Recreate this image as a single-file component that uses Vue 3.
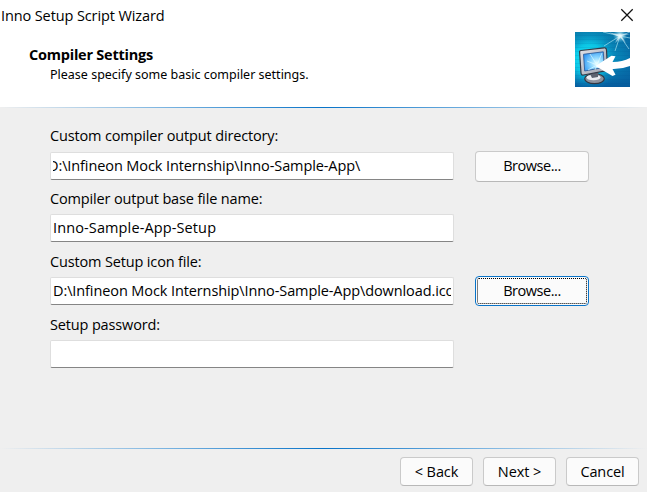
<script setup>
const fields = [
  { label: 'Custom compiler output directory:', value: 'D:\\Infineon Mock Internship\\Inno-Sample-App\\', browse: true, scrolled: true, id: 'f1' },
  { label: 'Compiler output base file name:', value: 'Inno-Sample-App-Setup', id: 'f2' },
  { label: 'Custom Setup icon file:', value: 'D:\\Infineon Mock Internship\\Inno-Sample-App\\download.ico', browse: true, focused: true, id: 'f3' },
  { label: 'Setup password:', value: '', id: 'f4' },
]
</script>

<template>
  <div class="window">
    <header class="head">
      <div class="titlebar">
        <span class="title">Inno Setup Script Wizard</span>
        <svg class="close" width="14" height="14" viewBox="0 0 14 14"><path d="M1.3 1.3 12.7 12.7M12.7 1.3 1.3 12.7" stroke="#111" stroke-width="1.25" fill="none" /></svg>
      </div>
      <div class="banner">
        <div class="heading">
          <h1><span>Compiler Settings</span></h1>
          <p><span>Please specify some basic compiler settings.</span></p>
        </div>
        <svg class="logo" width="55" height="55" viewBox="0 0 55 55">
          <defs>
            <linearGradient id="bg" x1="0" y1="0" x2="0" y2="1">
              <stop offset="0" stop-color="#087fae" /><stop offset=".5" stop-color="#079fca" /><stop offset="1" stop-color="#075a9d" />
            </linearGradient>
            <radialGradient id="glow" cx=".26" cy=".5" r=".56">
              <stop offset="0" stop-color="#20f4ff" /><stop offset=".5" stop-color="#0cd2ee" stop-opacity=".8" /><stop offset="1" stop-color="#0680bb" stop-opacity="0" />
            </radialGradient>
            <linearGradient id="shade" x1="0" y1="0" x2="1" y2="0">
              <stop offset=".5" stop-color="#075c9c" stop-opacity="0" /><stop offset="1" stop-color="#075c9c" stop-opacity=".65" />
            </linearGradient>
            <radialGradient id="screen" cx=".65" cy=".6" r=".75">
              <stop offset="0" stop-color="#ecffff" /><stop offset=".4" stop-color="#8fd9ff" /><stop offset="1" stop-color="#2791f2" />
            </radialGradient>
            <radialGradient id="star">
              <stop offset="0" stop-color="#fff" /><stop offset=".25" stop-color="#d8faff" stop-opacity=".75" /><stop offset="1" stop-color="#7bd8ee" stop-opacity="0" />
            </radialGradient>
            <linearGradient id="metal" x1="0" y1="0" x2="1" y2="1">
              <stop offset="0" stop-color="#e2e4ea" /><stop offset="1" stop-color="#9a9fac" />
            </linearGradient>
          </defs>
          <rect width="55" height="55" fill="url(#bg)" />
          <rect width="55" height="55" fill="url(#glow)" />
          <rect width="55" height="55" fill="url(#shade)" />
          <path d="M0 3.5h55M0 7.5h55M0 11.5h55M0 15.5h55M0 19.5h55M0 23.5h55M0 27.5h55M0 31.5h55M0 35.5h55M0 39.5h55M0 43.5h55M0 47.5h55M0 51.5h55" stroke="#024f88" stroke-opacity=".1" />
          <circle cx="45" cy="3.5" r="7" fill="url(#star)" />
          <path d="M45 4 28 0M45 4 29 14M45 4 40 19M45 4 54 17M45 4 55 0M45 4 55 6" stroke="#b9edf7" stroke-opacity=".6" stroke-width="1" />
          <path d="M45 2.5 34 .5 43.5 4.5 40 11 45.5 5.5 51 11 46.5 4 55 2Z" fill="#fff" fill-opacity=".6" />
          <ellipse cx="19.5" cy="46.7" rx="9.8" ry="5" fill="#8d929e" stroke="#323743" stroke-width="1.2" />
          <ellipse cx="18.5" cy="45.5" rx="7" ry="2.7" fill="#eceef2" />
          <path d="M14 40 23 38.5 23 45 17 46Z" fill="#5d6370" />
          <path d="M4.6 20.2Q4.3 18.8 6 18.5L29 15.8Q31.3 15.5 31.5 18L32.5 36Q32.7 38.3 30.5 38.9L8.5 43Q6.3 43.4 6 41Z" fill="url(#metal)" stroke="#343946" stroke-width="1.2" />
          <path d="M8.5 22.3 28.3 19.8 29.2 35.3 9.7 39Z" fill="url(#screen)" stroke="#315f9b" stroke-width=".9" />
          <path d="M22 33 15 22M22 33 12 29M22 33 13 38M22 33 20 38M22 33 27 21" stroke="#eaffff" stroke-opacity=".6" />
          <path d="M20.5 34 36.5 23.8 40.5 24.2 37.5 29.9Q47 30 55 26V34Q47 37.2 37.5 37L40.5 42.8 37.5 44Z" fill="#fff" />
        </svg>
      </div>
    </header>
    <main class="body">
      <div class="rule"></div>
      <form class="form" @submit.prevent>
        <section v-for="f in fields" :key="f.id" :class="['field', f.id]">
          <label><span>{{ f.label }}</span></label>
          <div class="row">
            <div class="input"><div class="clip"><span :class="['value', { scrolled: f.scrolled }]">{{ f.value }}</span></div></div>
            <button v-if="f.browse" type="button" :class="['btn', 'browse', { focused: f.focused }]"><span>Browse...</span></button>
          </div>
        </section>
      </form>
      <footer>
        <div class="rule"></div>
        <div class="actions">
          <button class="btn back"><span>&lt; Back</span></button>
          <button class="btn next"><span>Next &gt;</span></button>
          <button class="btn cancel"><span>Cancel</span></button>
        </div>
      </footer>
    </main>
  </div>
</template>

<style>
body { background: #fff; overflow: hidden; }
</style>

<style scoped>
* { box-sizing: border-box; }
.window { width: 647px; height: 492px; display: flex; flex-direction: column; background: #fff; color: #000; font: 14.5px/20px "Open Sans", "Noto Sans", sans-serif; white-space: nowrap; overflow: hidden; }
.head { height: 107px; flex: none; }
.titlebar { height: 32px; display: flex; justify-content: space-between; padding: 6px 13px 0 1px; }
.title { letter-spacing: -.11px; }
.close { margin-top: 2px; }
.banner { display: flex; justify-content: space-between; padding: 0 17px 0 29px; }
.heading { padding-top: 13px; }
h1 { margin: 0; font-size: 14.5px; line-height: 20px; font-weight: 700; letter-spacing: -.23px; }
p { margin: 0 0 0 21px; font: 12.5px/20px "Noto Sans", sans-serif; }
.logo { display: block; }
.body { flex: 1; display: flex; flex-direction: column; background: #efefef; }
.rule { height: 1px; flex: none; background: linear-gradient(90deg, #efefef 0, #7db5e1 25%, #0873c8 50%, #7db5e1 75%, #efefef 100%); }
.form { flex: 1; padding: 18px 0 0 50px; }
.field { height: 63px; }
label { display: block; height: 25px; line-height: 20px; letter-spacing: -.15px; }
.f1 label { height: 26px; }
.row { display: flex; align-items: center; gap: 21px; height: 28px; }
.input { width: 404px; height: 28px; background: #fff; border: 1px solid #dedede; border-bottom-color: #858585; border-radius: 2px; padding: 0 2px; }
.clip { overflow: hidden; height: 26px; line-height: 26px; }
.value { display: inline-block; letter-spacing: -.1px; }
.f2 .value { letter-spacing: .12px; }
.scrolled { margin-left: -5px; }
.btn { font: inherit; line-height: 20px; color: #000; background: #fbfbfb; border: 1px solid #cacaca; border-bottom-color: #b8b8b8; border-radius: 4px; padding: 0; letter-spacing: -.1px; flex: none; }
.browse { width: 114px; height: 31px; letter-spacing: -.45px; }
.browse.focused { height: 30px; border-color: #0873c8; outline: 1px dotted #000; outline-offset: -3px; }
.actions { display: flex; justify-content: flex-end; gap: 10px; padding: 8px 8px 6px 0; }
.actions .btn { width: 73px; height: 29px; }
</style>
